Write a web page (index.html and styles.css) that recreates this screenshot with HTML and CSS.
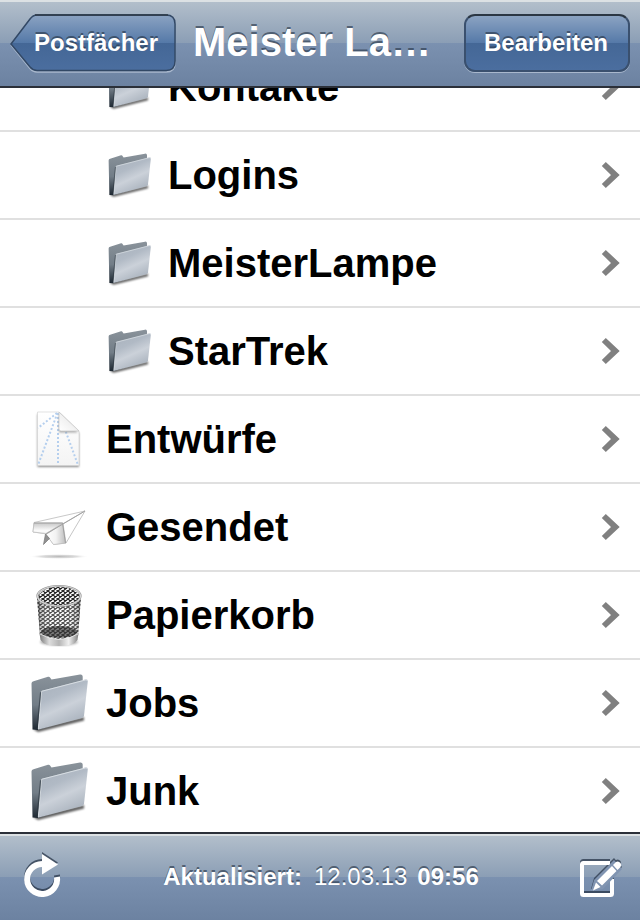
FILE: index.html
```html
<!DOCTYPE html>
<html lang="de">
<head>
<meta charset="utf-8">
<meta name="viewport" content="width=device-width, initial-scale=1">
<title>Meister Lampe</title>
<link rel="stylesheet" href="styles.css">
</head>
<body>
<svg class="defs" aria-hidden="true">
  <defs>
    <linearGradient id="backFill" x1="0" y1="0" x2="0" y2="1">
      <stop offset="0" stop-color="#8ba3c2"/><stop offset=".5" stop-color="#5579a8"/>
      <stop offset=".51" stop-color="#446796"/><stop offset="1" stop-color="#4b6e9f"/>
    </linearGradient>
    <linearGradient id="folderBack" x1="0" y1="0" x2="0" y2="1">
      <stop offset="0" stop-color="#8a939b"/><stop offset=".55" stop-color="#727d87"/><stop offset="1" stop-color="#1d2731"/>
    </linearGradient>
    <linearGradient id="folderFront" x1="0" y1="0" x2=".45" y2="1">
      <stop offset="0" stop-color="#a7b0bb"/><stop offset=".4" stop-color="#b1bac5"/>
      <stop offset=".65" stop-color="#cbd1d9"/><stop offset="1" stop-color="#aab3be"/>
    </linearGradient>
    <linearGradient id="paper" x1="0" y1="0" x2="0" y2="1">
      <stop offset="0" stop-color="#fff"/><stop offset="1" stop-color="#f4f4f4"/>
    </linearGradient>
    <linearGradient id="fold" x1="0" y1="1" x2="1" y2="0">
      <stop offset="0" stop-color="#fff"/><stop offset=".5" stop-color="#f0f0f0"/>
    </linearGradient>
    <linearGradient id="wing" x1="0" y1="0" x2="0" y2="1">
      <stop offset="0" stop-color="#c8c8c8"/><stop offset=".7" stop-color="#fafafa"/>
    </linearGradient>
    <linearGradient id="keel" x1="0" y1="0" x2="1" y2="0">
      <stop offset="0" stop-color="#fff"/><stop offset=".5" stop-color="#f2f2f2"/><stop offset="1" stop-color="#bbb"/>
    </linearGradient>
    <linearGradient id="metal" x1="0" y1="0" x2="1" y2="0">
      <stop offset="0" stop-color="#777"/><stop offset=".25" stop-color="#ddd"/><stop offset=".5" stop-color="#b5b5b5"/>
      <stop offset=".75" stop-color="#f0f0f0"/><stop offset="1" stop-color="#808080"/>
    </linearGradient>
    <linearGradient id="basketShade" x1="0" y1="0" x2="1" y2="0">
      <stop offset="0" stop-color="#222" stop-opacity=".45"/><stop offset=".3" stop-color="#fff" stop-opacity=".1"/>
      <stop offset=".7" stop-color="#fff" stop-opacity=".1"/><stop offset="1" stop-color="#222" stop-opacity=".4"/>
    </linearGradient>
    <pattern id="mesh" width="5" height="4" patternUnits="userSpaceOnUse">
      <path d="M0 0 5 4M5 0 0 4" stroke="#3c3c3c" stroke-width="1.100"/>
    </pattern>
    <pattern id="meshBack" width="5" height="4" patternUnits="userSpaceOnUse">
      <path d="M0 0 5 4M5 0 0 4" stroke="#222" stroke-width="1.200"/>
    </pattern>
    <radialGradient id="ground">
      <stop offset="0" stop-color="#bbb"/><stop offset=".6" stop-color="#ddd"/><stop offset="1" stop-color="#fff" stop-opacity="0"/>
    </radialGradient>
    <filter id="soft" x="-20%" y="-20%" width="140%" height="140%"><feGaussianBlur stdDeviation="1.3"/></filter>
  </defs>
  <symbol id="folder" viewBox="0 0 64 64">
    <path d="M5 58 10 61 56 49.500 56 46Z" fill="#000" opacity=".65" filter="url(#soft)"/>
    <path d="M3.500 12.500Q3.500 10.700 5.500 10.200L20 5.800Q21.500 5.400 22 6.600L23.500 8.500 52 3.500Q54.500 3.100 54.700 5.500L54.500 45 9.500 59 4.500 58.500Z" fill="url(#folderBack)"/>
    <path d="M14 19.800 57.500 8.600Q60 8.100 59.800 10.300L56 44.800Q55.800 46.600 54 47.100L10 58.700Z" fill="url(#folderFront)"/>
    <path d="M10.300 58 13.600 20.300 57.800 8.900Q59.800 8.500 59.500 10.300" fill="none" stroke="#dde2e7" stroke-width=".9"/>
    <path d="M9 58 12.600 21.300" stroke="#26303a" stroke-width="1.200" opacity=".6"/>
  </symbol>
  <symbol id="chevron" viewBox="0 0 20 28">
    <path d="M.8 5 4.800 1 18.700 14 4.800 27 .8 23 10 14Z" fill="#808080"/>
  </symbol>
</svg>

<header class="bar navbar">
  <button class="nav-button nav-button--back" type="button">
    <svg class="back-shape" viewBox="0 0 166 58" preserveAspectRatio="none" aria-hidden="true">
      <path d="M27 2H156Q165 2 165 11V49Q165 58 156 58H27Q23 58 20 54.500L1 31" fill="none" stroke="#a9b8cd" stroke-width="1.500"/>
      <path d="M27 1H156Q165 1 165 10V47Q165 56.500 156 56.500H27Q23 56.500 20 53L1 30 20 5Q23 1 27 1Z" fill="url(#backFill)" stroke="#324865" stroke-width="1.500"/>
      <path d="M25 1H158" stroke="#2b3744" stroke-width="1.500"/>
    </svg>
    <span class="nav-label">Postfächer</span>
  </button>
  <h1 class="title">Meister La…</h1>
  <button class="nav-button nav-button--edit" type="button">Bearbeiten</button>
</header>

<main class="viewport">
  <ul class="folders">
    <li><a class="row row--nested" href="#kontakte"><svg class="icon" aria-hidden="true"><use href="#folder"/></svg><span class="name">Kontakte</span><svg class="chevron" aria-hidden="true"><use href="#chevron"/></svg></a></li>
    <li><a class="row row--nested" href="#logins"><svg class="icon" aria-hidden="true"><use href="#folder"/></svg><span class="name">Logins</span><svg class="chevron" aria-hidden="true"><use href="#chevron"/></svg></a></li>
    <li><a class="row row--nested" href="#meisterlampe"><svg class="icon" aria-hidden="true"><use href="#folder"/></svg><span class="name">MeisterLampe</span><svg class="chevron" aria-hidden="true"><use href="#chevron"/></svg></a></li>
    <li><a class="row row--nested" href="#startrek"><svg class="icon" aria-hidden="true"><use href="#folder"/></svg><span class="name">StarTrek</span><svg class="chevron" aria-hidden="true"><use href="#chevron"/></svg></a></li>
    <li><a class="row" href="#entwuerfe">
      <svg class="icon" viewBox="0 0 64 64" aria-hidden="true">
        <path d="M9.500 7H31L51 26V60H9.500Z" fill="#000" opacity=".45" filter="url(#soft)"/>
        <path d="M9.500 5H31L51 24.500V58.500H9.500Z" fill="url(#paper)" stroke="#d5d5d5" stroke-width=".7"/>
        <g fill="none" stroke="#b5cfee" stroke-width="2" stroke-dasharray="2 2">
          <path d="M29 6 10 21M29.500 6 10 58M30 6V58M31 6 50 58"/>
        </g>
        <path d="M31 7 50 25.500H31Z" fill="#777" opacity=".6" filter="url(#soft)"/>
        <path d="M31 5 51 24H33Q31 24 31 22Z" fill="url(#fold)" stroke="#c4c4c4" stroke-width=".7"/>
      </svg>
      <span class="name">Entwürfe</span><svg class="chevron" aria-hidden="true"><use href="#chevron"/></svg></a></li>
    <li><a class="row" href="#gesendet">
      <svg class="icon" viewBox="0 0 64 64" aria-hidden="true">
        <ellipse cx="31" cy="61.500" rx="30" ry="2.500" fill="url(#ground)"/>
        <g stroke-linejoin="round">
          <path d="M57 16 6 27.500 5 37 19 39Z" fill="#fff" stroke="#c9c9c9"/>
          <path d="M6 28H35L18.500 38.500 5 37Z" fill="url(#wing)" stroke="#bbb" stroke-width=".7"/>
          <path d="M57 16 18 38.500 25.500 49.500 38 48Z" fill="#fff" stroke="#c6c6c6"/>
          <path d="M35 28.500 18 39.500 25.500 49.500 38 48Z" fill="url(#keel)" stroke="#bbb" stroke-width=".7"/>
          <path d="M17.500 39 15.500 49.500 21.500 43.500Z" fill="#909090" stroke="#777" stroke-width=".7"/>
          <path d="M57 16 18 39" fill="none" stroke="#a3a3a3"/>
          <path d="M6 28H34.500L37.500 48" fill="none" stroke="#a0a0a0"/>
        </g>
      </svg>
      <span class="name">Gesendet</span><svg class="chevron" aria-hidden="true"><use href="#chevron"/></svg></a></li>
    <li><a class="row" href="#papierkorb">
      <svg class="icon" viewBox="0 0 64 64" aria-hidden="true">
        <ellipse cx="31" cy="59" rx="19" ry="3.500" fill="#000" opacity=".3" filter="url(#soft)"/>
        <path d="M9 13Q31-8 53 13L51 22Q31 31 10 22Z" fill="url(#meshBack)"/>
        <path d="M9 16Q31 33 53 16L50 54Q31 64 12 54Z" fill="#fff" opacity=".6"/>
        <path d="M9 14Q31 33 53 14L50 53Q31 62 12 53Z" fill="url(#mesh)"/>
        <path d="M9 14Q31 33 53 14L50 53Q31 62 12 53Z" fill="url(#basketShade)"/>
        <ellipse cx="31" cy="49" rx="18" ry="6" fill="#222" opacity=".6"/>
        <path d="M11.500 50Q31 62 50.500 50L49.500 57Q46 63 31 63T12.500 57Z" fill="url(#metal)"/>
        <path d="M12 51Q31 62 50 51" fill="none" stroke="#eee" stroke-width=".8"/>
        <ellipse cx="31" cy="13" rx="21.500" ry="10" fill="none" stroke="#8b8b8b" stroke-width="2.200"/>
        <ellipse cx="31" cy="13" rx="21.500" ry="10" fill="none" stroke="#d8d8d8" stroke-width="1.200"/>
      </svg>
      <span class="name">Papierkorb</span><svg class="chevron" aria-hidden="true"><use href="#chevron"/></svg></a></li>
    <li><a class="row" href="#jobs"><svg class="icon" aria-hidden="true"><use href="#folder"/></svg><span class="name">Jobs</span><svg class="chevron" aria-hidden="true"><use href="#chevron"/></svg></a></li>
    <li><a class="row" href="#junk"><svg class="icon" aria-hidden="true"><use href="#folder"/></svg><span class="name">Junk</span><svg class="chevron" aria-hidden="true"><use href="#chevron"/></svg></a></li>
  </ul>
</main>

<footer class="bar toolbar">
  <button class="tool" type="button" aria-label="Aktualisieren">
    <svg viewBox="0 0 44 48" aria-hidden="true">
      <path d="M37 24A15 15 0 1 1 22 11" fill="none" stroke="#fff" stroke-width="6"/>
      <path d="M22 1 38 11.500 22 21.500Z" fill="#fff"/>
    </svg>
  </button>
  <p class="status"><strong>Aktualisiert:</strong><span class="date">12.03.13</span><strong>09:56</strong></p>
  <button class="tool" type="button" aria-label="Neue E-Mail">
    <svg viewBox="0 0 44 48" aria-hidden="true">
      <path d="M32 10H5.500Q4 10 4 11.500V40.500Q4 42 5.500 42H32.500Q34 42 34 40.500V26" fill="none" stroke="#fff" stroke-width="4"/>
      <path d="M36 7 16 27 13 38 25 36 44 16Z" fill="#8094b1"/>
      <path d="M35 12 38 9Q40.300 7.500 42.500 10 44 12.300 42.500 14L39.500 17Z" fill="#fff"/>
      <path d="M34 13 38.500 18 24 32.500 19 28Z" fill="#fff"/>
      <path d="M18 29.500 22.500 34 15 37.500Z" fill="#fff"/>
    </svg>
  </button>
</footer>
</body>
</html>
```

FILE: styles.css
```css
* {
  box-sizing: border-box;
}

body {
  display: flex;
  flex-direction: column;
  height: 100vh;
  margin: 0;
  overflow: hidden;
  background: #fff;
  color: #000;
  font-family: "Liberation Sans", Arial, Helvetica, sans-serif;
}

.defs {
  position: absolute;
  width: 0;
  height: 0;
}

button {
  margin: 0;
  border: 0;
  background: none;
  color: inherit;
  font: inherit;
}

.bar {
  display: flex;
  flex: none;
  align-items: center;
  height: 88px;
  color: #fff;
  text-shadow: 0 -2px 0 rgba(40, 54, 72, 0.65);
  background: linear-gradient(#b4c0cc 0%, #8b9eb5 50%, #7b91b0 50%, #6c82a1 100%);
}

.navbar {
  gap: 17px;
  padding: 0 10px;
  border-bottom: 2px solid #2b3039;
  box-shadow: inset 0 2px #dce1e4;
}

.nav-button {
  flex: none;
  height: 58px;
  font-size: 24px;
  font-weight: bold;
  text-shadow: 0 -2px 0 rgba(40, 54, 72, 0.65);
}

.nav-button--back {
  position: relative;
  padding: 0 18px 0 24px;
}

.back-shape {
  position: absolute;
  inset: 0;
  width: 100%;
  height: 100%;
  overflow: visible;
}

.nav-label {
  position: relative;
}

.nav-button--edit {
  padding: 0 20px 0 18px;
  border: 2px solid #3a506e;
  border-top-color: #2b3744;
  border-radius: 11px;
  background: linear-gradient(#8ba3c2, #5579a8 50%, #446796 50%, #4b6e9f);
  box-shadow: 0 1px #a9b8cd;
}

.title {
  flex: 1;
  min-width: 0;
  margin: 0;
  padding-bottom: 2px;
  overflow: hidden;
  font-size: 40px;
  line-height: 50px;
  text-overflow: ellipsis;
  white-space: nowrap;
}

.viewport {
  flex: 1;
  min-height: 0;
  overflow: hidden;
}

/* The list is scrolled so that its first row is half under the bar. */
.folders {
  margin: -44px 0 0;
  padding: 0;
  list-style: none;
}

.row {
  display: flex;
  align-items: center;
  gap: 14px;
  height: 88px;
  padding: 0 19px 0 28px;
  border-bottom: 2px solid #e0e0e0;
  color: inherit;
  text-decoration: none;
}

.row--nested {
  padding-left: 106px;
}

.icon {
  flex: none;
  width: 64px;
  height: 64px;
}

.row--nested .icon {
  width: 48px;
  height: 48px;
}

.name {
  flex: 1;
  font-size: 40px;
  font-weight: bold;
}

.chevron {
  flex: none;
  width: 20px;
  height: 28px;
}

.toolbar {
  justify-content: space-between;
  padding: 0 18px 0 20px;
  border-top: 2px solid #2b3039;
  box-shadow: inset 0 2px #dce1e4;
}

.tool {
  width: 44px;
  height: 48px;
  padding: 0;
}

.tool svg {
  display: block;
  width: 100%;
  height: 100%;
  filter: drop-shadow(0 -2px 0 rgba(40, 54, 72, 0.75));
}

.status {
  display: flex;
  gap: 10px;
  margin: 0;
  font-size: 24px;
}

.date {
  padding-left: 2px;
}
```
